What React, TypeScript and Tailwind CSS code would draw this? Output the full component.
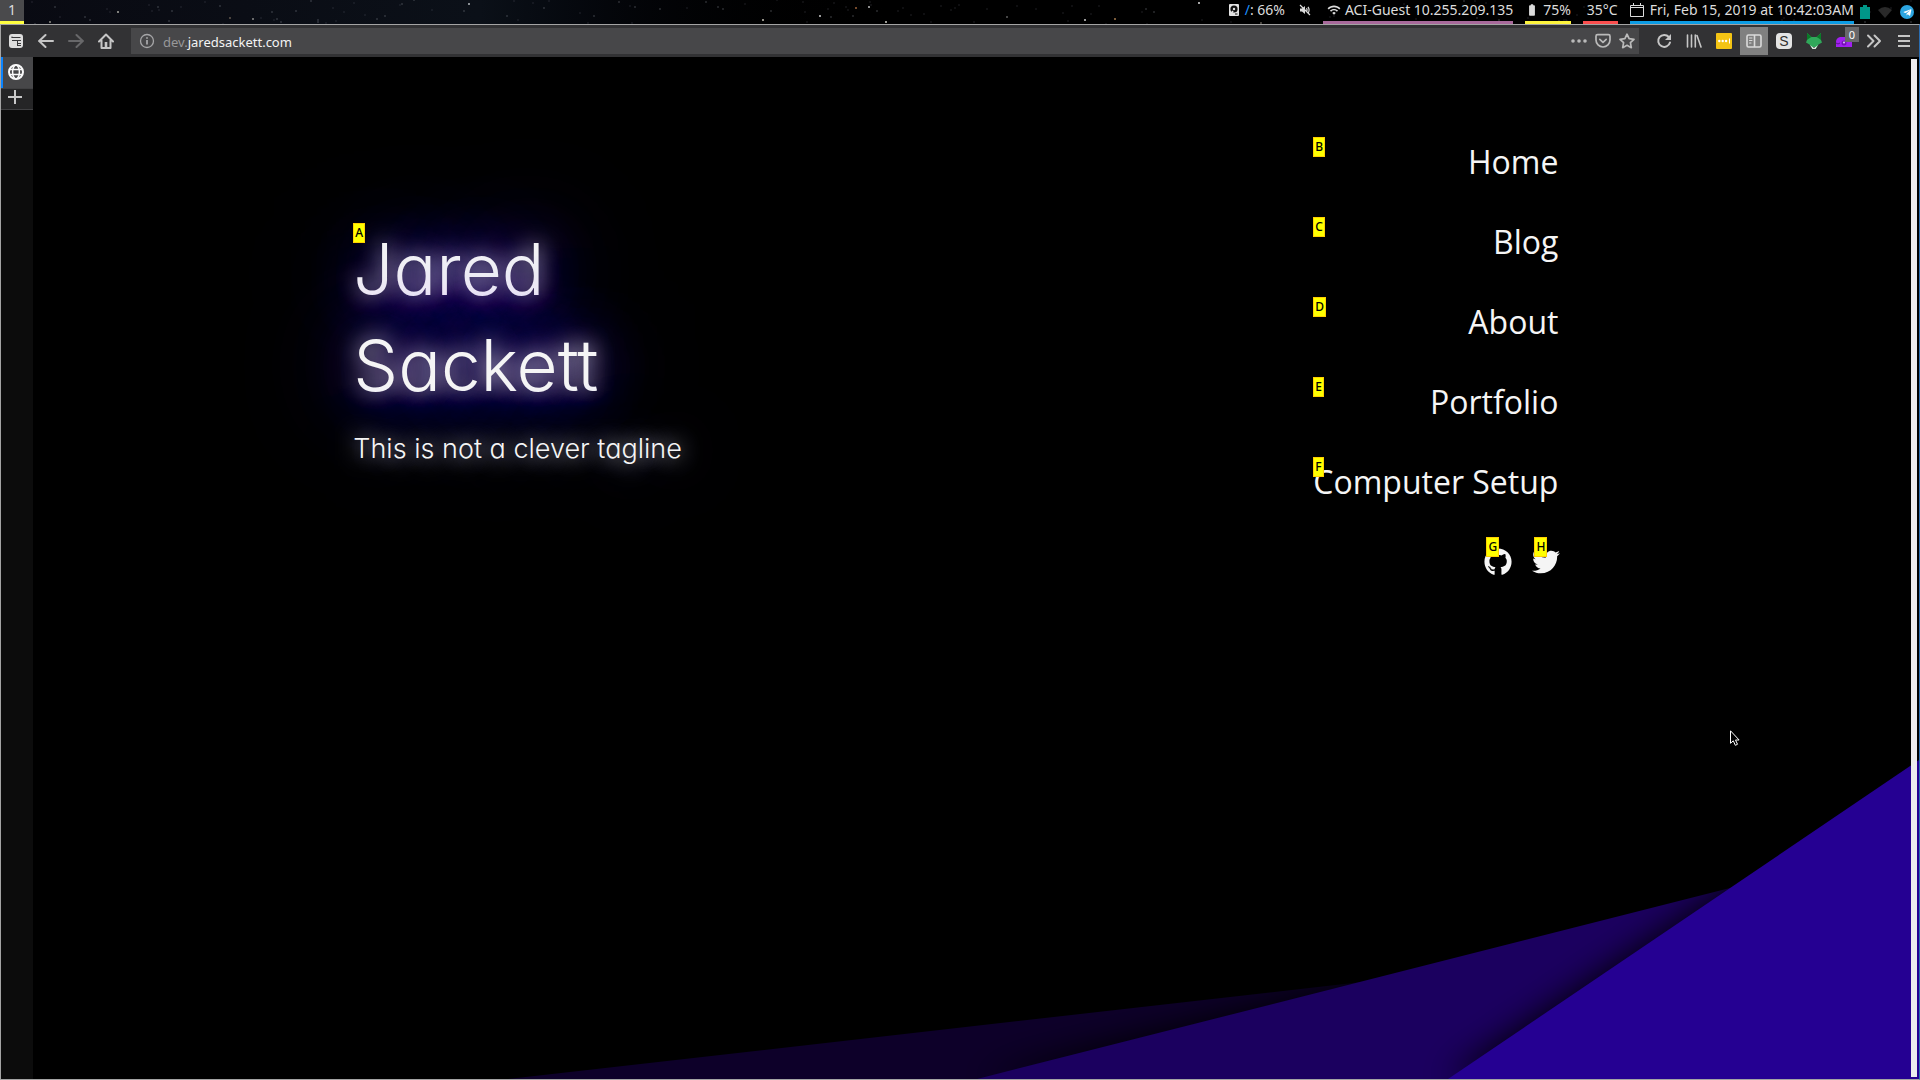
import React from 'react'
import { FaGithub, FaTwitter, FaTelegramPlane } from 'react-icons/fa'
import { MdWifi, MdBatteryStd } from 'react-icons/md'

const brightStars = [
  [118, 12, '#a8a8a0'], [50, 22, '#8d8d85'], [253, 19, '#8a8a88'], [230, 18, '#62574e'],
  [469, 4, '#b5b8bd'], [763, 20, '#c4c0b4'], [820, 16, '#cfcfcf'], [856, 8, '#9b6038'],
  [869, 7, '#bdbdbd'], [886, 22, '#d0d0c8'], [1085, 20, '#cfcfcf'], [1115, 19, '#a57a4c'],
  [1199, 3, '#dedede'], [1007, 17, '#5c5c5c'], [1261, 23, '#5c5850'],
] as const

const scatter = (n: number) => {
  const v = Math.sin(n * 12.9898) * 43758.5453
  return v - Math.floor(v)
}

const faintStars = Array.from({ length: 150 }, (_, i) => ({
  x: Math.round(scatter(i + 1) * 1920),
  y: Math.round(scatter(i + 501) * 24),
}))

const links = [
  ['B', 'Home'],
  ['C', 'Blog'],
  ['D', 'About'],
  ['E', 'Portfolio'],
  ['F', 'Computer Setup'],
]

function Starfield() {
  return (
    <svg className="absolute inset-0 h-full w-full" viewBox="0 0 1920 24" preserveAspectRatio="xMinYMin slice" aria-hidden="true">
      {faintStars.map((s, i) => (
        <circle key={i} cx={s.x} cy={s.y} r="1" fill="#8a8f98" opacity={i % 3 === 0 ? 0.3 : 0.15} />
      ))}
      {brightStars.map(([x, y, c]) => (
        <circle key={x} cx={x} cy={y} r="1" fill={c} />
      ))}
    </svg>
  )
}

function StatusBar() {
  return (
    <header className="relative flex h-6 shrink-0 justify-between bg-linear-to-r from-[#090a12] via-[#0b1018] via-25% to-black to-48% text-sm leading-5 whitespace-nowrap text-[#dcdcdc]">
      <Starfield />
      <button className="relative w-6 border-b-3 border-[#ffff40] bg-[#4a4a4c] pb-0.5 leading-5">1</button>
      <div className="relative flex">
        <div className="flex items-center gap-1.5 pb-1">
          <svg width="10" height="12" viewBox="0 0 10 12" aria-hidden="true">
            <rect width="10" height="12" rx="1" fill="#e4e4e4" />
            <circle cx="5" cy="5" r="3.6" fill="#111" />
            <circle cx="5" cy="5" r="1.2" fill="#e4e4e4" />
            <path d="M1.500 10.500 4 7" stroke="#e4e4e4" strokeWidth="1.6" />
            <path d="M6 10h2.500" stroke="#111" />
          </svg>
          <span><span className="text-[#1e90ff]">/</span>: 66%</span>
        </div>
        <div className="mr-3 ml-3.5 flex items-center pb-1">
          <svg width="12" height="12" viewBox="0 0 12 12" fill="none" stroke="#dcdcdc" strokeWidth="1.2" aria-hidden="true">
            <path d="M1 4.5h2L6 2v8L3 7.5H1Z" fill="#dcdcdc" stroke="none" />
            <path d="M7.5 4.2q1.2 1.8 0 3.600M9 2.800q2.200 3.200 0 6.400M1 1l10 10" />
          </svg>
        </div>
        <div className="mr-3 flex items-center gap-1 border-b-3 border-[#a8699b] pb-0.5 pl-1">
          <MdWifi size={14} />
          <span>ACI-Guest 10.255.209.135</span>
        </div>
        <div className="mr-3 flex items-center gap-1 border-b-3 border-[#fdf43c] pb-0.5">
          <MdBatteryStd size={14} />
          <span>75%</span>
        </div>
        <div className="mr-3 flex items-center border-b-3 border-[#fb4e4e] pb-0.5 pl-1">35°C</div>
        <div className="flex items-center gap-1.5 border-b-3 border-[#0c9ce4] pb-0.5">
          <svg width="14" height="14" viewBox="0 0 14 14" fill="none" stroke="#dcdcdc" aria-hidden="true">
            <path d="M.5 2.500h13v11H.5zM.5 4.500h13M3.500 0v3M10.500 0v3" />
          </svg>
          <span>Fri, Feb 15, 2019 at 10:42:03AM</span>
        </div>
        <div className="flex items-center gap-2 pr-1.5 pl-1.5">
          <svg width="10" height="14" viewBox="0 0 10 14" fill="#009688" aria-hidden="true">
            <path d="M3 0h4v2h3v12H0V2h3Z" />
          </svg>
          <svg width="14" height="11" viewBox="0 0 14 11" fill="#2a2a2a" aria-hidden="true">
            <path d="M0 3q7-6 14 0L7 11Z" />
          </svg>
          <span className="flex h-3.5 w-3.5 items-center justify-center rounded-full bg-[#2ca5e0] text-white">
            <FaTelegramPlane size={9} />
          </span>
        </div>
      </div>
    </header>
  )
}

function Tool({ label, children, active = false }: { label: string; children: React.ReactNode; active?: boolean }) {
  return (
    <button
      aria-label={label}
      className={active ? 'relative flex h-7 w-7 shrink-0 items-center justify-center bg-[#808080]' : 'relative flex h-7 w-7 shrink-0 items-center justify-center'}
    >
      {children}
    </button>
  )
}

function Line({ d, color = '#c6c6c6', w = 2, children }: { d: string; color?: string; w?: number; children?: React.ReactNode }) {
  return (
    <svg width="16" height="16" viewBox="0 0 16 16" fill="none" stroke={color} strokeWidth={w} strokeLinecap="round" strokeLinejoin="round" aria-hidden="true">
      <path d={d} />
      {children}
    </svg>
  )
}

function Toolbar() {
  return (
    <div className="flex h-8 shrink-0 items-center bg-[#323234] px-px">
      <div className="flex gap-0.5">
        <Tool label="Tab list">
          <svg width="14" height="14" viewBox="0 0 14 14" aria-hidden="true">
            <rect width="14" height="14" rx="3" fill="#dedede" />
            <path d="M2.500 3.500h9M3 6.500h9M8.500 9.500h3.500" stroke="#38383a" />
            <path d="M3 2.500v1M8.500 6v6M8.500 11.500H12" stroke="#38383a" />
          </svg>
        </Tool>
        <Tool label="Back"><Line d="M15 8H1M7.500 2 1.200 8l6.300 6" /></Tool>
        <Tool label="Forward"><Line d="M1 8h14M8.500 2l6.300 6-6.300 6" color="#68686a" /></Tool>
        <Tool label="Home">
          <Line d="M1 8.500 8 1.500l7 7M3.500 7.500V15h9V7.500">
            <rect x="6.700" y="9" width="2.600" height="6" fill="#c6c6c6" stroke="none" />
          </Line>
        </Tool>
      </div>
      <div className="mx-[11px] flex h-[26px] min-w-0 flex-1 items-center gap-2 bg-[#474749] pr-1 pl-2">
        <svg width="16" height="16" viewBox="0 0 16 16" fill="none" stroke="#a6a6a8" strokeWidth="1.300" aria-hidden="true">
          <circle cx="8" cy="8" r="6.500" />
          <path d="M8 7v4.500M8 4.300v1.500" strokeWidth="1.800" />
        </svg>
        <button aria-label="Page address" className="flex-1 pt-0.5 text-left text-[13px] leading-5 text-[#f4f4f4]">
          <span className="text-[#98989a]">dev.</span>jaredsackett.com
        </button>
        <button aria-label="Page actions">
          <svg width="16" height="16" viewBox="0 0 16 16" fill="#bababa" aria-hidden="true">
            <circle cx="2" cy="8" r="1.800" /><circle cx="8" cy="8" r="1.800" /><circle cx="14" cy="8" r="1.800" />
          </svg>
        </button>
        <button aria-label="Save to Pocket"><Line d="M2.500 1.700h11q1.500 0 1.500 1.500V7a7 7 0 0 1-14 0V3.200q0-1.500 1.500-1.500ZM4.800 6.300 8 9.300l3.200-3" color="#bababa" w={1.7} /></button>
        <button aria-label="Bookmark"><Line d="m8 1.200 2.100 4.500 4.900.6-3.600 3.400.9 5L8 12.300l-4.300 2.400.9-5L1 6.300l4.900-.6Z" color="#bababa" w={1.7} /></button>
      </div>
      <div className="flex gap-0.5">
        <Tool label="Reload"><Line d="M14 9.500A6 6 0 1 1 12.800 4"><path d="M15 1v6H9Z" fill="#c6c6c6" stroke="none" /></Line></Tool>
        <Tool label="Library"><Line d="M1.500 2v12M5.500 2v12M9.300 2v12M11 2.500 15 14" w={1.6} /></Tool>
        <Tool label="Password manager">
          <svg width="16" height="16" viewBox="0 0 16 16" aria-hidden="true">
            <rect width="16" height="16" rx="1" fill="#f4c414" />
            <circle cx="3.300" cy="8" r="1.200" fill="#fff" /><circle cx="6.700" cy="8" r="1.200" fill="#fff" /><circle cx="10.100" cy="8" r="1.200" fill="#fff" />
            <path d="M13.500 5.500v5" stroke="#fff" />
          </svg>
        </Tool>
        <Tool label="Sidebar" active>
          <Line d="M2.500 2h11q1.500 0 1.500 1.500v9q0 1.500-1.500 1.500h-11Q1 14 1 12.500v-9Q1 2 2.500 2ZM8.500 2v12" color="#dadada" w={1.6}>
            <path d="M3.500 5h2.500M3.500 7.500h2.500M3.500 10h1.500" strokeWidth="1" />
          </Line>
        </Tool>
        <Tool label="Stylus">
          <span className="flex h-4 w-4 items-center justify-center rounded-sm bg-[#e4e4e4] font-['Liberation_Sans'] text-sm leading-4 text-[#303030]">S</span>
        </Tool>
        <Tool label="Fox extension">
          <svg width="16" height="16" viewBox="0 0 16 16" aria-hidden="true">
            <path d="M1 0 5.500 4h5L15 0v7l1 2.500-3.500 2L9.500 16h-3l-3-4.500-3.500-2L1 7Z" fill="#30a85a" />
            <path d="M1 0 5.500 4 3 5.500 1 7ZM15 0l-4.500 4L13 5.500 15 7Z" fill="#0a7a28" />
            <path d="m4 12 2.500 4h3l2.500-4-2.500 2h-3Z" fill="#e4ece6" />
            <path d="M7 14h2l-1 1.300Z" fill="#333" />
          </svg>
        </Tool>
        <Tool label="Purple extension">
          <svg width="16" height="16" viewBox="0 0 16 16" aria-hidden="true">
            <path d="M0 14V9q0-4 4-5h12v10Z" fill="#a020f0" />
            <circle cx="8" cy="10" r="2.500" fill="#7510b8" /><circle cx="8" cy="9.500" r="1" fill="#e0c0ff" />
            <path d="M0 10q2 2 4 0" stroke="#5c0e90" fill="none" />
          </svg>
          <span className="absolute top-0 right-[-1px] flex h-[15px] w-3.5 items-center justify-center bg-[#68686a] text-[11px] leading-none text-white">0</span>
        </Tool>
        <Tool label="More tools"><Line d="m2 2.500 5.500 5.500L2 13.500M8.500 2.500 14 8l-5.500 5.500" /></Tool>
        <Tool label="Menu">
          <svg width="12" height="12" viewBox="0 0 12 12" stroke="#c6c6c6" strokeWidth="2" aria-hidden="true"><path d="M0 1h12M0 6h12M0 11h12" /></svg>
        </Tool>
      </div>
    </div>
  )
}

function Sidebar() {
  return (
    <aside className="flex w-8 shrink-0 flex-col bg-[#0c0c0c]">
      <button aria-label="Current tab" className="flex h-[31px] items-center border-l-2 border-[#0a84ff] bg-[#474749] pb-0.5 pl-[5px]">
        <svg width="16" height="16" viewBox="0 0 16 16" fill="none" stroke="#fafafa" strokeWidth="1.500" aria-hidden="true">
          <circle cx="8" cy="8" r="7" strokeWidth="2" />
          <ellipse cx="8" cy="8" rx="3.400" ry="7" />
          <path d="M1.500 5.500h13M1.500 10.500h13" />
        </svg>
      </button>
      <button aria-label="New tab" className="flex h-[22px] items-start border-y border-[#404042] bg-[#252526] pl-[7px]">
        <svg width="14" height="16" viewBox="0 0 14 16" stroke="#c8c8c8" strokeWidth="2" aria-hidden="true"><path d="M0 8h14M7 1v14" /></svg>
      </button>
    </aside>
  )
}

function Hint({ children, className = '' }: { children: string; className?: string }) {
  return (
    <span className={`absolute flex h-5 items-center border border-[#ffd000] bg-[#ffff00] px-px font-['Noto_Sans'] text-xs font-medium text-black [text-shadow:none] ${className}`}>
      {children}
    </span>
  )
}

function Swoosh() {
  return (
    <svg className="absolute right-0 bottom-0 w-[1420px]" viewBox="499 739 1420 340" aria-hidden="true">
      <defs>
        <filter id="shade" filterUnits="userSpaceOnUse" x="300" y="600" width="1800" height="700">
          <feGaussianBlur stdDeviation="17" />
        </filter>
      </defs>
      <path d="M508 1079 1344 984 1919 918v161Z" fill="#0d0029" />
      <path d="M977 1079 1730 888 1919 840v239Z" fill="#000" filter="url(#shade)" />
      <path d="M977 1079 1730 888 1919 840v239Z" fill="#1b005f" />
      <path d="M1448 1079 1919 760v319Z" fill="#000" filter="url(#shade)" />
      <path d="M1448 1079 1919 760v319Z" fill="#250092" />
    </svg>
  )
}

function Page() {
  return (
    <main className="relative flex min-w-0 flex-1 items-start justify-between overflow-hidden bg-black pr-[18.8%] pl-[16.7%] text-[#f5f5f5]">
      <Swoosh />
      <section className="relative pt-[164px] font-['Inter'] font-light [font-feature-settings:'cv11'] [text-shadow:0_0_22px_#fff,0_0_60px_#5a00ff,0_0_100px_#6a00ff,0_0_120px_#5a00ff]">
        <h1 className="max-w-72 text-[71px] leading-24">
          <a href="#top">Jared Sackett</a>
        </h1>
        <p className="mt-4 text-[27px] leading-10">This is not a clever tagline</p>
        <Hint className="top-[166px] left-0">A</Hint>
      </section>
      <nav className="relative flex flex-col items-end gap-8 pt-20 font-['Open_Sans']">
        {links.map(([key, name]) => (
          <a key={key} href={'#' + key} className="relative w-full pt-0.5 text-right text-[32px] leading-[46px]">
            {name}
            <Hint className="top-0 left-0">{key}</Hint>
          </a>
        ))}
        <div className="-mr-0.5 flex gap-5">
          <a href="#github" aria-label="GitHub" className="relative flex h-12 items-center pt-0.5">
            <FaGithub size={28} />
            <Hint className="top-0 left-0.5">G</Hint>
          </a>
          <a href="#twitter" aria-label="Twitter" className="relative flex h-12 items-center pt-0.5">
            <FaTwitter size={28} />
            <Hint className="top-0 left-0.5">H</Hint>
          </a>
        </div>
      </nav>
      <div className="absolute top-0.5 right-0.5 bottom-0.5 w-1.5 bg-[#ececee]" />
      <svg className="absolute top-[673px] left-[1697px]" width="12" height="17" viewBox="0 0 12 17" fill="#000" stroke="#fff" aria-hidden="true">
        <path d="M.5.800v12.500l2.800-2.500 2 4.500 2.200-1-2-4.300h3.600Z" />
      </svg>
    </main>
  )
}

export default function App() {
  return (
    <div className="flex h-screen flex-col bg-black font-['Noto_Sans',sans-serif]">
      <StatusBar />
      <div className="flex min-h-0 flex-1 flex-col border border-[#a4a4a4] border-r-[#2a6cb0]">
        <Toolbar />
        <div className="flex min-h-0 flex-1">
          <Sidebar />
          <Page />
        </div>
      </div>
    </div>
  )
}
